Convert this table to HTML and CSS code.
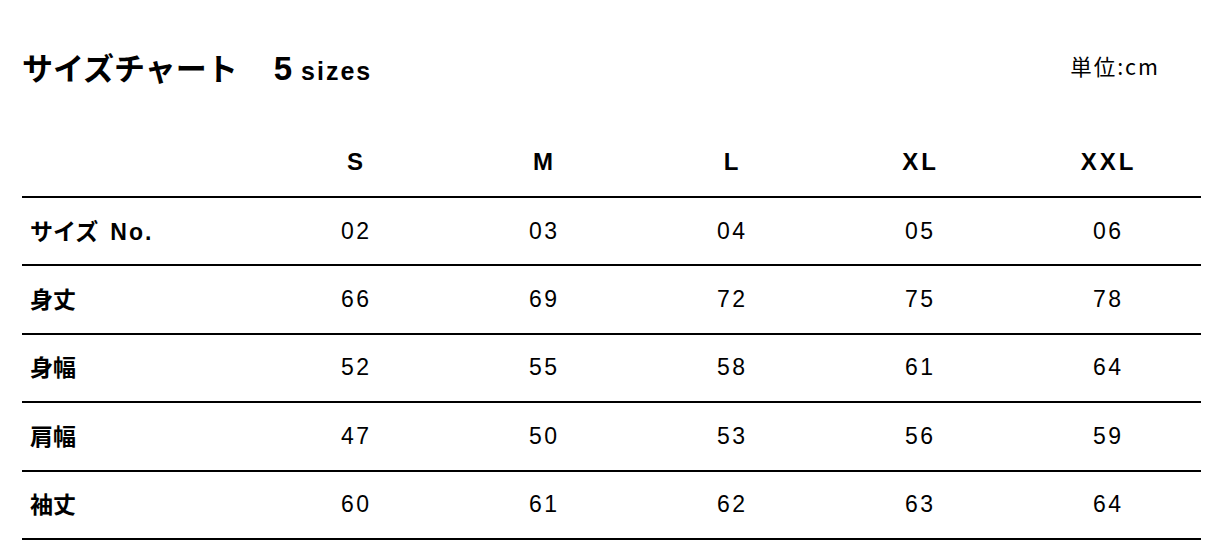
FILE: index.html
```html
<!DOCTYPE html>
<html lang="ja">
<head>
<meta charset="utf-8">
<link rel="stylesheet" href="styles.css">
</head>
<body>
<div class="chart">
  <div class="head">
    <h1 class="title"><span class="jp">サイズチャート</span><span class="count"><span class="num">5</span> sizes</span></h1>
    <div class="unit">単位:cm</div>
  </div>
  <div class="table">
    <div class="row header">
      <div class="label"></div>
      <div class="cell">S</div>
      <div class="cell">M</div>
      <div class="cell">L</div>
      <div class="cell">XL</div>
      <div class="cell">XXL</div>
    </div>
    <div class="row">
      <div class="label">サイズ<span class="latin">No.</span></div>
      <div class="cell">02</div>
      <div class="cell">03</div>
      <div class="cell">04</div>
      <div class="cell">05</div>
      <div class="cell">06</div>
    </div>
    <div class="row">
      <div class="label">身丈</div>
      <div class="cell">66</div>
      <div class="cell">69</div>
      <div class="cell">72</div>
      <div class="cell">75</div>
      <div class="cell">78</div>
    </div>
    <div class="row">
      <div class="label">身幅</div>
      <div class="cell">52</div>
      <div class="cell">55</div>
      <div class="cell">58</div>
      <div class="cell">61</div>
      <div class="cell">64</div>
    </div>
    <div class="row">
      <div class="label">肩幅</div>
      <div class="cell">47</div>
      <div class="cell">50</div>
      <div class="cell">53</div>
      <div class="cell">56</div>
      <div class="cell">59</div>
    </div>
    <div class="row last">
      <div class="label">袖丈</div>
      <div class="cell">60</div>
      <div class="cell">61</div>
      <div class="cell">62</div>
      <div class="cell">63</div>
      <div class="cell">64</div>
    </div>
  </div>
</div>
</body>
</html>
```
FILE: styles.css
```css
html, body {
  margin: 0;
  padding: 0;
  background: #fff;
}
body {
  font-family: "Noto Sans CJK JP", "Noto Sans", sans-serif;
  color: #000;
}
.chart {
  width: 1179px;
  margin-left: 22px;
}
.head {
  height: 128px;
  display: flex;
  justify-content: space-between;
  align-items: flex-start;
}
.title {
  margin: 0;
  padding-top: 44px;
  font-size: 31px;
  font-weight: 700;
  line-height: 46px;
  display: flex;
  align-items: baseline;
}
.title .count {
  margin-left: 36px;
  font-family: "Liberation Sans", sans-serif;
  font-size: 25px;
  letter-spacing: 2px;
}
.title .num {
  font-size: 33px;
  letter-spacing: 0;
}
.unit {
  margin-right: 41px;
  padding-top: 52px;
  font-size: 21.5px;
  line-height: 28px;
  letter-spacing: 2px;
}
.table {
  display: flex;
  flex-direction: column;
}
.row {
  display: grid;
  grid-template-columns: 239px repeat(5, 188px);
  height: 68.4px;
  box-sizing: border-box;
  border-bottom: 2px solid #000;
  align-items: center;
}
.row.header {
  height: 70px;
}
.label {
  padding-left: 8px;
  padding-bottom: 3px;
  font-size: 23px;
  font-weight: 700;
}
.label .latin {
  margin-left: 12px;
  font-family: "Liberation Sans", sans-serif;
  letter-spacing: 2px;
}
.cell {
  text-align: center;
  font-family: "Liberation Sans", sans-serif;
  font-size: 23px;
  letter-spacing: 2.5px;
  text-indent: 2.5px;
}
.header .cell {
  font-weight: 700;
  font-size: 24px;
  letter-spacing: 3px;
  text-indent: 3px;
}
```
